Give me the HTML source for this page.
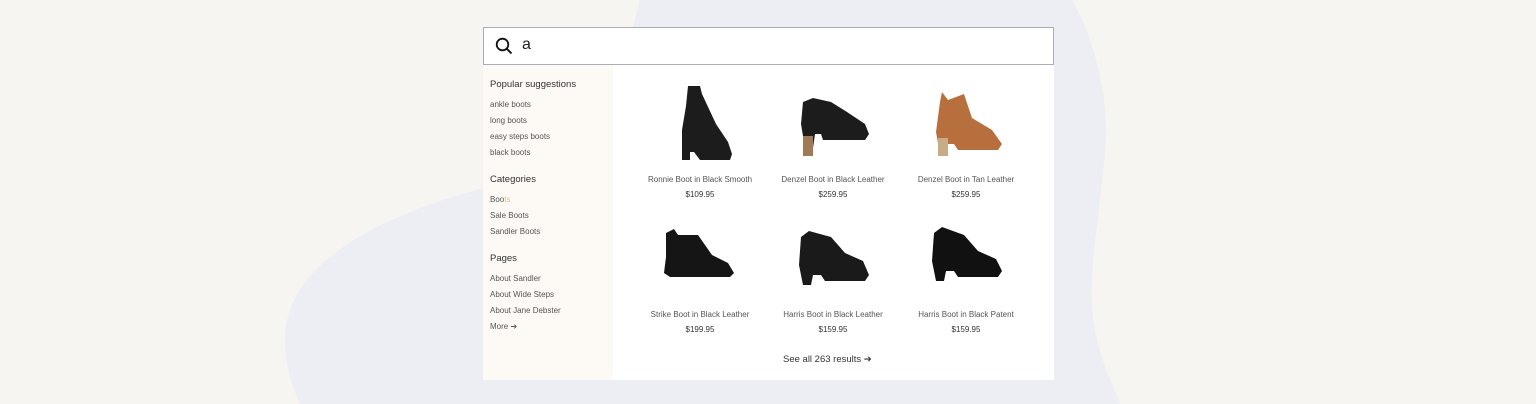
<!DOCTYPE html>
<html><head><style>
*{margin:0;padding:0;box-sizing:border-box}
body{width:1536px;height:404px;overflow:hidden;background:#f6f5f2;font-family:"Liberation Sans",sans-serif;position:relative}
#bg{position:absolute;left:0;top:0}
.box{position:absolute;left:483px;top:27px;width:571px;height:353px;background:#fff}
.search{position:absolute;left:0;top:0;width:571px;height:38px;border:1px solid #a9adb8;background:#fff}
.search span{position:absolute;left:38px;top:8px;font-size:16px;color:#222}
.side{position:absolute;left:0;top:38px;width:130px;height:315px;background:#fdfaf5}
.side h4{position:absolute;left:7px;font-size:9.5px;font-weight:normal;color:#333}
.side a{position:absolute;left:7px;font-size:8px;color:#555;text-decoration:none}
.p{position:absolute;width:130px;text-align:center}
.p .t{font-size:8px;color:#555}
.p .pr{font-size:8px;color:#333;margin-top:6px}
.p svg{display:block;margin:0 auto 9px}
.all{position:absolute;left:300px;top:327px;font-size:9.5px;color:#333}
</style></head><body>
<svg id="bg" width="1536" height="404"><path d="M640 0 L1072 0 C1095 40 1110 100 1105 150 C1100 220 1085 280 1095 330 C1100 360 1115 390 1120 404 L300 404 C280 360 280 320 300 290 C330 240 420 200 520 180 C600 160 620 80 640 0Z" fill="#eceef3"/></svg>
<div class="box">
<div class="search">
<svg style="position:absolute;left:11px;top:9px" width="18" height="18" viewBox="0 0 18 18"><circle cx="7.5" cy="7.5" r="5.8" fill="none" stroke="#111" stroke-width="1.8"/><path d="M11.8 11.8L16.5 16.5" stroke="#111" stroke-width="1.9"/></svg>
<span>a</span></div>
<div class="side">
<h4 style="top:14px">Popular suggestions</h4>
<a style="top:35px">ankle boots</a><a style="top:51px">long boots</a><a style="top:67px">easy steps boots</a><a style="top:83px">black boots</a>
<h4 style="top:109px">Categories</h4>
<a style="top:130px">Boo<span style="color:#d9c89a">ts</span></a><a style="top:146px">Sale Boots</a><a style="top:162px">Sandler Boots</a>
<h4 style="top:188px">Pages</h4>
<a style="top:209px">About Sandler</a><a style="top:225px">About Wide Steps</a><a style="top:241px">About Jane Debster</a><a style="top:257px">More ➔</a>
</div>
<div class="p" style="left:152px;top:55px"><svg width="80" height="84" viewBox="0 0 80 84"><path d="M28 4h12l2 8 14 30 12 18 4 12-2 6H40l-6-8h-4v8h-8v-30l4-24z" fill="#1c1c1c"/></svg><div class="t">Ronnie Boot in Black Smooth</div><div class="pr">$109.95</div></div>
<div class="p" style="left:285px;top:55px"><svg width="80" height="84" viewBox="0 0 80 84"><path d="M10 20l10-4 18 4 16 10 18 12 4 10-4 6H30l-2-6h-6l-2 14h-8l-4-24z" fill="#1c1c1c"/><rect x="10" y="54" width="10" height="20" fill="#a07a55"/></svg><div class="t">Denzel Boot in Black Leather</div><div class="pr">$259.95</div></div>
<div class="p" style="left:418px;top:55px"><svg width="80" height="84" viewBox="0 0 80 84"><path d="M16 10l6 8 16-6 8 24 20 12 10 14-4 6H32l-4-6h-6l-2 10h-6l-4-22 4-30z" fill="#b86f3e"/><rect x="12" y="56" width="10" height="18" fill="#c9ab86"/></svg><div class="t">Denzel Boot in Tan Leather</div><div class="pr">$259.95</div></div>
<div class="p" style="left:152px;top:190px"><svg width="80" height="84" viewBox="0 0 80 84"><path d="M6 16l8-4 4 6 20 0 14 20 16 8 6 10-4 4H10l-6-4 2-16z" fill="#151515"/></svg><div class="t">Strike Boot in Black Leather</div><div class="pr">$199.95</div></div>
<div class="p" style="left:285px;top:190px"><svg width="80" height="84" viewBox="0 0 80 84"><path d="M8 20l8-6 22 6 14 16 18 8 6 14-4 6H32l-4-6h-8l-2 10h-8l-4-20z" fill="#1a1a1a"/></svg><div class="t">Harris Boot in Black Leather</div><div class="pr">$159.95</div></div>
<div class="p" style="left:418px;top:190px"><svg width="80" height="84" viewBox="0 0 80 84"><path d="M8 16l8-6 22 8 14 16 18 8 6 12-4 6H32l-4-6h-8l-2 10h-8l-4-20z" fill="#111"/></svg><div class="t">Harris Boot in Black Patent</div><div class="pr">$159.95</div></div>
<div class="all">See all 263 results ➔</div>
</div>
</body></html>
